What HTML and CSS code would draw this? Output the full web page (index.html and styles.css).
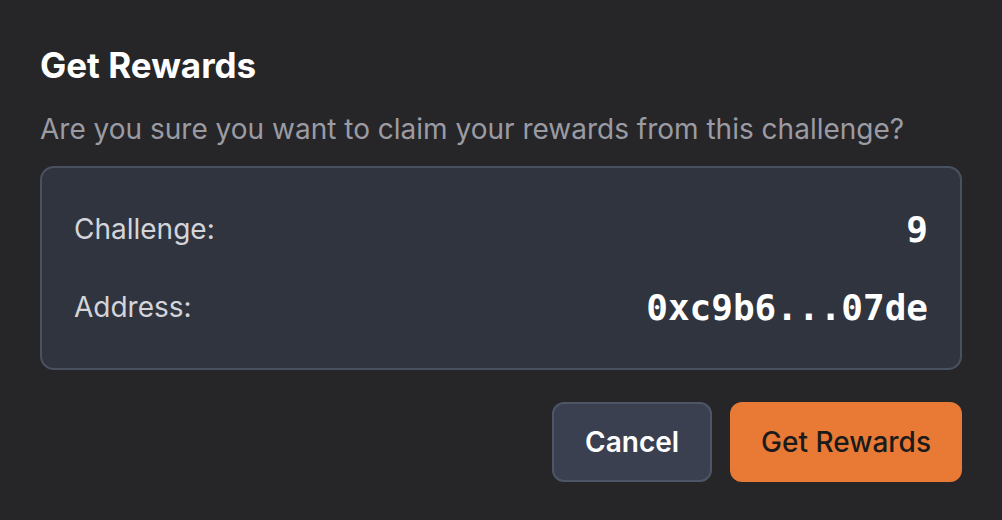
FILE: index.html
```html
<!DOCTYPE html>
<html>
<head>
<meta charset="utf-8">
<link rel="stylesheet" href="styles.css">
</head>
<body>
<div class="dialog">
  <h1 class="title">Get Rewards</h1>
  <p class="desc">Are you sure you want to claim your rewards from this challenge?</p>
  <div class="info">
    <div class="row"><span class="label">Challenge:</span><span class="value">9</span></div>
    <div class="row"><span class="label">Address:</span><span class="value">0xc9b6...07de</span></div>
  </div>
  <div class="actions">
    <button class="btn btn-cancel">Cancel</button>
    <button class="btn btn-primary">Get Rewards</button>
  </div>
</div>
</body>
</html>
```
FILE: styles.css
```css
html, body {
  margin: 0;
  background: #262629;
}
body {
  font-family: Inter, "Noto Sans", sans-serif;
  width: 1002px;
  height: 520px;
  overflow: hidden;
}
.dialog {
  padding: 43px 40px 0 40px;
  display: flex;
  flex-direction: column;
}
.title {
  margin: 0;
  font-size: 35px;
  font-weight: 700;
  color: #ffffff;
  line-height: 44px;
}
.desc {
  margin: 24px 0 0 0;
  font-size: 28px;
  color: #9b9ba3;
  line-height: 36px;
}
.info {
  margin-top: 19px;
  background: #30343e;
  border: 2px solid #4a5160;
  border-radius: 14px;
  padding: 41px 32px;
  display: flex;
  flex-direction: column;
  gap: 38px;
}
.row {
  display: flex;
  justify-content: space-between;
  align-items: center;
  height: 40px;
}
.label {
  font-size: 28px;
  color: #d3d5db;
}
.value {
  font-family: "DejaVu Sans Mono", monospace;
  font-weight: 700;
  font-size: 36px;
  color: #ffffff;
}
.actions {
  margin-top: 32px;
  display: flex;
  justify-content: flex-end;
  gap: 18px;
}
.btn {
  height: 80px;
  border-radius: 12px;
  font-family: Inter, sans-serif;
  font-size: 28px;
  padding: 0 31px;
  cursor: pointer;
}
.btn-cancel {
  background: #3a4050;
  border: 2px solid #4d5566;
  color: #ffffff;
  font-weight: 600;
}
.btn-primary {
  background: #e87a36;
  border: none;
  color: #1b1b1b;
  font-weight: 500;
}
```
